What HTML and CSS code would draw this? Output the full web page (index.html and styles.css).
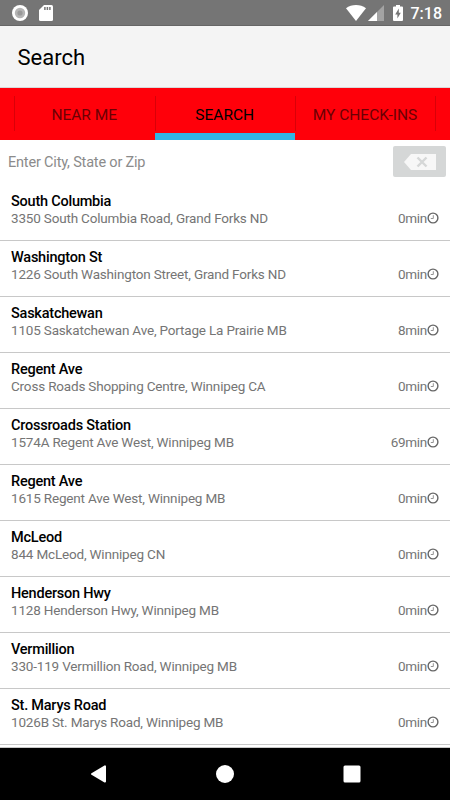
FILE: index.html
```html
<!DOCTYPE html>
<html lang="en">
<head>
    <meta charset="UTF-8">
    <meta name="viewport" content="width=device-width, initial-scale=1.0">
    <title>Search</title>
    <link rel="stylesheet" href="styles.css">
</head>
<body>
    <div class="status-bar">
        <svg class="record-icon" width="16" height="16" viewBox="0 0 16 16">
            <circle cx="8" cy="8" r="8" fill="#fff"/>
            <circle cx="8" cy="8" r="5.2" fill="#b5b5b5"/>
            <circle cx="8" cy="8" r="2.6" fill="#999"/>
        </svg>
        <svg class="sd-icon" width="14" height="16" viewBox="0 0 14 16">
            <path d="M5 0H12.5Q14 0 14 1.5V14.5Q14 16 12.5 16H1.5Q0 16 0 14.5V5Z" fill="#fff"/>
            <path d="M5.9 2V5M8.4 2V5M10.9 2V5" stroke="#757575" stroke-width="1.5"/>
        </svg>
        <svg class="wifi-icon" width="20" height="16" viewBox="0 0 20 16">
            <path d="M0 3.3Q4.4 0 10 0T20 3.3L10 16Z" fill="#fff"/>
        </svg>
        <svg class="signal-icon" width="16" height="16" viewBox="0 0 16 16">
            <path d="M16 0V16H0Z" fill="#a3a3a3"/>
            <path d="M9 7V16H0Z" fill="#fff"/>
        </svg>
        <svg class="battery-icon" width="10" height="16" viewBox="0 0 10 16">
            <path d="M3 0H7V1.6H9Q10 1.6 10 2.6V15Q10 16 9 16H1Q0 16 0 15V2.6Q0 1.6 1 1.6H3Z" fill="#fff"/>
            <path d="M5.8 3.6L2.2 9.4H4.4V13.4L7.8 7.8H5.8Z" fill="#757575"/>
        </svg>
        <span class="time">7:18</span>
    </div>
    <header class="header">
        <h1>Search</h1>
    </header>
    <nav class="tabs">
        <a class="tab">NEAR ME</a>
        <a class="tab active">SEARCH</a>
        <a class="tab">MY CHECK-INS</a>
    </nav>
    <div class="search">
        <input type="text" placeholder="Enter City, State or Zip">
        <button>
            <svg width="32" height="16" viewBox="0 0 32 16">
                <path d="M0 8L7 0H32V16H7Z" fill="#f7f7f7"/>
                <path d="M13.5 3.5L22.5 12.5M22.5 3.5L13.5 12.5" stroke="#d5d7d7" stroke-width="2.4"/>
            </svg>
        </button>
    </div>
    <ul class="salons">
        <li>
            <div class="info"><h2>South Columbia</h2><p>3350 South Columbia Road, Grand Forks ND</p></div>
            <span class="wait">0min<svg class="clock"><use href="#clock"/></svg></span>
        </li>
        <li>
            <div class="info"><h2>Washington St</h2><p>1226 South Washington Street, Grand Forks ND</p></div>
            <span class="wait">0min<svg class="clock"><use href="#clock"/></svg></span>
        </li>
        <li>
            <div class="info"><h2>Saskatchewan</h2><p>1105 Saskatchewan Ave, Portage La Prairie MB</p></div>
            <span class="wait">8min<svg class="clock"><use href="#clock"/></svg></span>
        </li>
        <li>
            <div class="info"><h2>Regent Ave</h2><p>Cross Roads Shopping Centre, Winnipeg CA</p></div>
            <span class="wait">0min<svg class="clock"><use href="#clock"/></svg></span>
        </li>
        <li>
            <div class="info"><h2>Crossroads Station</h2><p>1574A Regent Ave West, Winnipeg MB</p></div>
            <span class="wait">69min<svg class="clock"><use href="#clock"/></svg></span>
        </li>
        <li>
            <div class="info"><h2>Regent Ave</h2><p>1615 Regent Ave West, Winnipeg MB</p></div>
            <span class="wait">0min<svg class="clock"><use href="#clock"/></svg></span>
        </li>
        <li>
            <div class="info"><h2>McLeod</h2><p>844 McLeod, Winnipeg CN</p></div>
            <span class="wait">0min<svg class="clock"><use href="#clock"/></svg></span>
        </li>
        <li>
            <div class="info"><h2>Henderson Hwy</h2><p>1128 Henderson Hwy, Winnipeg MB</p></div>
            <span class="wait">0min<svg class="clock"><use href="#clock"/></svg></span>
        </li>
        <li>
            <div class="info"><h2>Vermillion</h2><p>330-119 Vermillion Road, Winnipeg MB</p></div>
            <span class="wait">0min<svg class="clock"><use href="#clock"/></svg></span>
        </li>
        <li>
            <div class="info"><h2>St. Marys Road</h2><p>1026B St. Marys Road, Winnipeg MB</p></div>
            <span class="wait">0min<svg class="clock"><use href="#clock"/></svg></span>
        </li>
    </ul>
    <footer class="nav-bar">
        <svg width="18" height="18" viewBox="0 0 18 18">
            <path d="M3 9L16 1.4V16.6Z" fill="#fff" stroke="#fff" stroke-width="2" stroke-linejoin="round"/>
        </svg>
        <svg width="18" height="18" viewBox="0 0 18 18">
            <circle cx="9" cy="9" r="9" fill="#fff"/>
        </svg>
        <svg width="18" height="18" viewBox="0 0 18 18">
            <rect x="0.5" y="0.5" width="17" height="17" rx="1.5" fill="#fff"/>
        </svg>
    </footer>
    <svg class="defs">
        <symbol id="clock" viewBox="0 0 12 12">
            <circle cx="6" cy="6" r="4.9" fill="none" stroke="#666" stroke-width="1.4"/>
            <path d="M6.3 3.2V6.5H3.8" fill="none" stroke="#888" stroke-width="0.9"/>
        </symbol>
    </svg>
</body>
</html>
```
FILE: styles.css
```css
* {
    box-sizing: border-box;
}
body {
    margin: 0;
    height: 800px;
    display: flex;
    flex-direction: column;
    overflow: hidden;
    font-family: Roboto, sans-serif;
    background: #fff;
}
h1, h2, p, ul {
    margin: 0;
    padding: 0;
}
.status-bar {
    height: 26px;
    padding: 0 8px 0 12px;
    display: flex;
    align-items: center;
    background: #757575;
    border-bottom: 1px solid #666;
}
.sd-icon {
    margin-left: 11px;
}
.wifi-icon {
    margin-left: auto;
}
.signal-icon {
    margin-left: 2px;
}
.battery-icon {
    margin-left: 9px;
}
.time {
    margin-left: 8px;
    color: #fff;
    font-size: 16px;
    font-weight: 500;
    line-height: 26px;
    padding-top: 2px;
}
.header {
    height: 62px;
    padding-left: 17.5px;
    background: #f4f4f4;
    border-bottom: 1px solid #d8d8d8;
}
.header h1 {
    font-size: 22px;
    font-weight: 400;
    line-height: 63px;
    color: #000;
}
.tabs {
    height: 52px;
    padding-left: 14px;
    display: flex;
    background: #ff000a;
}
.tab {
    width: 140.5px;
    text-align: center;
    font-size: 15.5px;
    line-height: 54px;
    color: #6b0004;
    background: linear-gradient(#d90008, #d90008) 0 8px / 1px 35px no-repeat;
}
.tab:last-child {
    padding-right: 1px;
    background: linear-gradient(#d90008, #d90008) 0 8px / 1px 35px no-repeat,
        linear-gradient(#d90008, #d90008) 100% 8px / 1px 35px no-repeat;
    width: 141px;
}
.tab.active {
    color: #000;
    border-bottom: 7px solid #33b5e5;
}
.search {
    height: 45px;
    padding: 6px 4px 0 8px;
    display: flex;
    justify-content: space-between;
}
.search input {
    width: 300px;
    height: 32px;
    padding: 0;
    border: 0;
    outline: 0;
    background: none;
    font-family: inherit;
    font-size: 14.5px;
    letter-spacing: -0.19px;
}
.search input::placeholder {
    color: #8b8b8b;
}
.search button {
    width: 53px;
    height: 31px;
    padding: 0;
    display: flex;
    align-items: center;
    justify-content: center;
    border: 0;
    border-radius: 2px;
    background: #d5d7d7;
}
.salons {
    flex: 1;
    list-style: none;
    border-bottom: 1px solid #c8c8c8;
}
.salons li {
    height: 56px;
    padding: 8px 11px 0;
    display: flex;
    justify-content: space-between;
    border-bottom: 1px solid #c8c8c8;
}
.info h2 {
    font-size: 14.5px;
    font-weight: 500;
    line-height: 18px;
    letter-spacing: -0.23px;
    color: #000;
}
.info p {
    margin-top: -1px;
    font-size: 13.5px;
    line-height: 17px;
    letter-spacing: -0.18px;
    color: #757575;
}
.wait {
    display: flex;
    align-items: center;
    height: 17px;
    margin-top: 16px;
    font-size: 13.5px;
    letter-spacing: -0.3px;
    color: #757575;
}
.clock {
    width: 12px;
    height: 12px;
}
.nav-bar {
    height: 52px;
    padding: 0 89px;
    display: flex;
    align-items: center;
    justify-content: space-between;
    background: #000;
}
.defs {
    display: none;
}
```
